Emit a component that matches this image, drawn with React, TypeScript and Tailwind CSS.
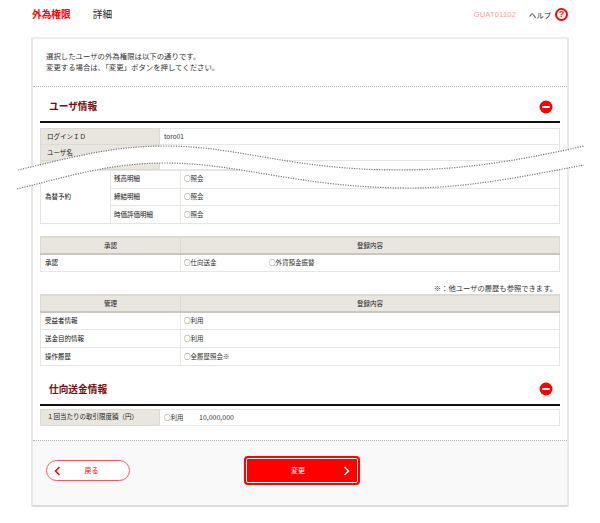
const font = { fontFamily: '"Noto Sans CJK JP", "Liberation Sans", sans-serif' };

const thCell = 'bg-[#e9e6df] border border-[#dcdad4] text-[6.5px] font-normal text-[#222] text-left pl-[6px]';
const tdCell = 'border border-[#e6e6e6] text-[6.5px] text-[#333] pl-[3px]';
const labelCell = 'border border-[#e6e6e6] text-[6.5px] text-[#111]';
const headCell = 'bg-[#e9e6df] border-x border-x-[#dcdad4] border-t-2 border-t-[#dcdad4] border-b-2 border-b-[#c9c6be] text-[6.5px] font-normal text-[#222] text-center';

function MinusIcon() {
  return (
    <svg width="14" height="14" viewBox="0 0 14 14">
      <circle cx="7" cy="7" r="6.5" fill="#f00" />
      <rect x="3" y="6" width="8" height="2" rx="1" fill="#fff" />
    </svg>
  );
}

function SectionTitle({ title }: { title: string }) {
  return (
    <div className="flex h-[36px] items-center justify-between border-b-2 border-b-[#111] pl-[9px] pr-[7px] pt-[5px]">
      <h2 className="text-[9.7px] font-bold text-[#7d0a0a]">{title}</h2>
      <MinusIcon />
    </div>
  );
}

function Chevron({ dir, color }: { dir: 'left' | 'right'; color: string }) {
  return (
    <svg width="7" height="10" viewBox="0 0 7 10" fill="none">
      <path
        d={dir === 'left' ? 'M5.5 1 L1.5 5 L5.5 9' : 'M1.5 1 L5.5 5 L1.5 9'}
        stroke={color}
        strokeWidth="1.5"
      />
    </svg>
  );
}

function HeadTable({ left, right, rows }: { left: string; right: string; rows: { label: string; values: string[] }[] }) {
  return (
    <table className="w-full table-fixed border-collapse">
      <colgroup>
        <col className="w-[140px]" />
        <col />
      </colgroup>
      <thead>
        <tr className="h-[17px]">
          <th className={headCell}>{left}</th>
          <th className={headCell}>{right}</th>
        </tr>
      </thead>
      <tbody>
        {rows.map((r) => (
          <tr key={r.label} className="h-[17.7px]">
            <td className={`${labelCell} pl-[4px]`}>{r.label}</td>
            <td className={tdCell}>
              <div className="flex">
                {r.values.map((v) => (
                  <span key={v} className="w-[85px]">{v}</span>
                ))}
              </div>
            </td>
          </tr>
        ))}
      </tbody>
    </table>
  );
}

export default function App() {
  return (
    <div className="relative h-[523px] w-[600px] overflow-hidden bg-white" style={font}>
      {/* Title bar */}
      <header className="flex h-[37px] items-start pl-[32px] pr-[32px] pt-[8px]">
        <h1 className="text-[9.7px] leading-[13px] font-bold text-[#f00]">外為権限</h1>
        <span className="ml-[22px] text-[9.7px] leading-[13px] text-[#222]">詳細</span>
        <span className="ml-auto text-[7.5px] leading-[14px] tracking-[0.2px] text-[#f3a08e]" style={{ fontFamily: '"Liberation Sans", sans-serif' }}>
          GUAT01102
        </span>
        <span className="ml-[13px] text-[7.3px] leading-[14px] text-[#222]">ヘルプ</span>
        <span className="ml-[4px] flex h-[13px] w-[13px] items-center justify-center rounded-full border-2 border-[#f00] text-[9px] leading-none font-bold text-[#f00]" style={{ fontFamily: '"Liberation Sans", sans-serif' }}>
          ?
        </span>
      </header>

      {/* Card */}
      <main className="mx-[31px] h-[470px] overflow-hidden rounded-[2px] border-x-2 border-t-2 border-b-2 border-x-[#e8e8e8] border-t-[#ececec] border-b-[#dcdcdc]">
        <div className="h-[48px] border-b border-dotted border-b-[#b5b5b5] pl-[13px] pt-[11px] text-[7.4px] leading-[11px] text-[#333]">
          <p>選択したユーザの外為権限は以下の通りです。</p>
          <p>変更する場合は、「変更」ボタンを押してください。</p>
        </div>

        <div className="h-[353px] px-[7px]">
          <SectionTitle title="ユーザ情報" />

          <table className="mt-[5px] w-full table-fixed border-collapse">
            <colgroup>
              <col className="w-[119px]" />
              <col />
            </colgroup>
            <tbody>
              <tr className="h-[16px]">
                <th className={thCell}>ログインＩＤ</th>
                <td className={`${tdCell} pl-[4px]`}>toro01</td>
              </tr>
              <tr className="h-[16px]">
                <th className={thCell}>ユーザ名</th>
                <td className={tdCell} />
              </tr>
              <tr className="h-[9px]">
                <th className={thCell} />
                <td className={tdCell} />
              </tr>
            </tbody>
          </table>

          <table className="w-full table-fixed border-collapse">
            <colgroup>
              <col className="w-[70px]" />
              <col className="w-[70px]" />
              <col />
            </colgroup>
            <tbody>
              <tr className="h-[17.7px]">
                <td rowSpan={3} className={`${labelCell} pl-[4px]`}>為替予約</td>
                <td className={`${labelCell} pl-[3px]`}>残高明細</td>
                <td className={tdCell}>○照会</td>
              </tr>
              <tr className="h-[17.7px]">
                <td className={`${labelCell} pl-[3px]`}>締結明細</td>
                <td className={tdCell}>○照会</td>
              </tr>
              <tr className="h-[17.7px]">
                <td className={`${labelCell} pl-[3px]`}>時価評価明細</td>
                <td className={tdCell}>○照会</td>
              </tr>
            </tbody>
          </table>

          <div className="mt-[12px]">
            <HeadTable
              left="承認"
              right="登録内容"
              rows={[{ label: '承認', values: ['○仕向送金', '○外貨預金振替'] }]}
            />
          </div>

          <p className="mt-[11px] h-[11px] pr-[3px] text-right text-[7.3px] leading-[11px] text-[#333]">
            ※：他ユーザの履歴も参照できます。
          </p>

          <HeadTable
            left="管理"
            right="登録内容"
            rows={[
              { label: '受益者情報', values: ['○利用'] },
              { label: '送金目的情報', values: ['○利用'] },
              { label: '操作履歴', values: ['○全履歴照会※'] },
            ]}
          />

          <div className="mt-[4px]">
            <SectionTitle title="仕向送金情報" />
          </div>

          <table className="mt-[3px] w-full table-fixed border-collapse">
            <colgroup>
              <col className="w-[119px]" />
              <col />
            </colgroup>
            <tbody>
              <tr className="h-[16px]">
                <th className={thCell}>１回当たりの取引限度額（円）</th>
                <td className={`${tdCell} pl-[4px]`}>
                  <span className="inline-block w-[35px]">○利用</span>
                  <span className="text-[7px]">10,000,000</span>
                </td>
              </tr>
            </tbody>
          </table>
        </div>

        {/* Footer actions */}
        <div className="flex h-[66px] items-center border-t border-dotted border-t-[#b5b5b5] bg-[#f9f9f9] pb-[6px] pl-[13px]">
          <button className="grid h-[21px] w-[84px] grid-cols-[1fr_auto_1fr] items-center rounded-full border border-[#f55] bg-white pl-[7px] text-[7px] text-[#f00]">
            <Chevron dir="left" color="#f00" />
            <span>戻る</span>
          </button>
          <button className="ml-[114px] grid h-[29px] w-[116px] grid-cols-[1fr_auto_1fr] items-center rounded-[4px] border-2 border-[#f00] bg-[#f00] pr-[8px] text-[7px] text-white shadow-[inset_0_0_0_1px_#fff]">
            <span />
            <span>変更</span>
            <span className="justify-self-end">
              <Chevron dir="right" color="#fff" />
            </span>
          </button>
        </div>
      </main>

      {/* Page-break wave across the first table */}
      <svg className="absolute left-0 top-0" width="600" height="523" viewBox="0 0 600 523" fill="none">
        <path
          d="M18 170 C 70 158 110 146 165 146 C 240 146 290 170 400 170 C 470 170 530 158 584 146 L 584 165 C 530 175 470 188 410 188 C 300 188 240 163 165 163 C 110 163 70 176 17 189 Z"
          fill="#fff"
        />
        <path d="M18 170 C 70 158 110 146 165 146 C 240 146 290 170 400 170 C 470 170 530 158 584 146" stroke="#777" strokeWidth="1.2" strokeDasharray="1.2 1.3" />
        <path d="M17 189 C 70 176 110 163 165 163 C 240 163 300 188 410 188 C 470 188 530 175 584 165" stroke="#777" strokeWidth="1.2" strokeDasharray="1.2 1.3" />
      </svg>
    </div>
  );
}
